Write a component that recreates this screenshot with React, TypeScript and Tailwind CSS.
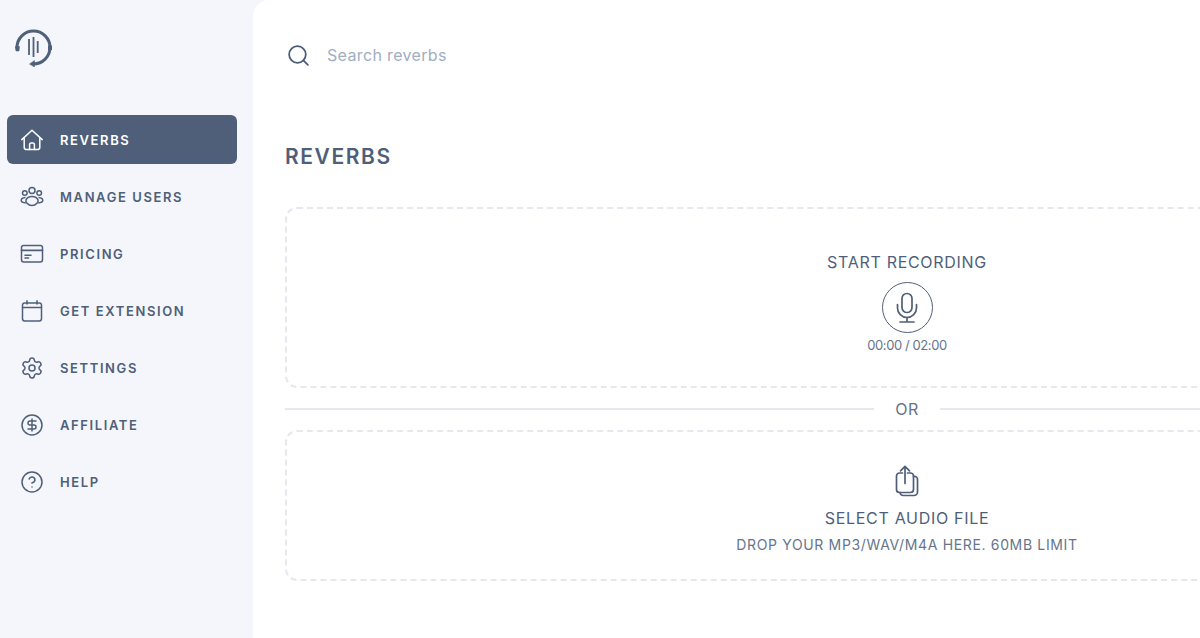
import React from "react";
import { Settings, CircleDollarSign, CircleHelp, Search } from "lucide-react";

const HomeIcon = () => (
  <svg width="24" height="24" viewBox="0 0 24 24" fill="none" stroke="currentColor" strokeWidth="1.5" strokeLinejoin="round" strokeLinecap="round">
    <path d="M1.800 11.600 12 2.200l10.200 9.400" />
    <path d="M4.200 10v9.200a2.400 2.400 0 0 0 2.400 2.400h10.800a2.400 2.400 0 0 0 2.400-2.400V10" />
    <path d="M9.600 21.600v-5.200a1.400 1.400 0 0 1 1.400-1.400h2a1.400 1.400 0 0 1 1.400 1.400v5.200" />
  </svg>
);
const UsersIcon = () => (
  <svg width="24" height="24" viewBox="0 0 24 24" fill="none" stroke="currentColor" strokeWidth="1.5">
    <circle cx="12" cy="5.500" r="3" />
    <circle cx="4.800" cy="8" r="2.300" />
    <circle cx="19.200" cy="8" r="2.300" />
    <path d="M12 11.500c2.800 0 5.200 1.500 6 3.500.5 1.300-.2 2.300-1 3.200-1.200 1.300-3 2.300-5 2.300s-3.800-1-5-2.300c-.8-.9-1.500-1.900-1-3.200.8-2 3.200-3.500 6-3.500Z" />
    <path d="M5.500 12.500c-2.300.2-4.300 1.300-4.300 2.800s1.800 2.500 4.600 2.600M18.500 12.500c2.300.2 4.300 1.300 4.300 2.800s-1.800 2.500-4.600 2.600" />
  </svg>
);
const CardIcon = () => (
  <svg width="24" height="24" viewBox="0 0 24 24" fill="none" stroke="currentColor" strokeWidth="1.5" strokeLinecap="round">
    <rect x="1.500" y="3.500" width="21" height="16.500" rx="2.200" />
    <path d="M1.500 8.300h21" strokeWidth="1.700" />
    <path d="M5 13.300h6M5 16.100h3.500" />
  </svg>
);
const CalIcon = () => (
  <svg width="24" height="24" viewBox="0 0 24 24" fill="none" stroke="currentColor" strokeWidth="1.5" strokeLinecap="round">
    <rect x="2.500" y="4" width="19" height="18" rx="2.200" />
    <path d="M2.500 8.500h19M7 1.800V5M17 1.800V5" />
  </svg>
);
const LogoIcon = () => (
  <svg width="38" height="39" viewBox="0 0 38 39" fill="none" stroke="#4f6079">
    <path d="M2 19.500A16.500 16.500 0 1 1 18.500 36" strokeWidth="3" />
    <path d="M0 18.500h4.500l-.5 4.500H1Z" fill="#4f6079" strokeWidth="0.500" />
    <path d="M19.500 32.500v6.500l-5-3Z" fill="#4f6079" strokeWidth="0.500" />
    <path d="M14 11v16M18.500 9v20M22.700 13v12" strokeWidth="1.800" />
    <path d="M35 17.500v4.500" strokeWidth="4" />
  </svg>
);
const MicIcon = () => (
  <svg width="24" height="32" viewBox="0 0 24 32" fill="none" stroke="#4f5f7a" strokeWidth="1.700" strokeLinecap="round">
    <rect x="7" y="1.500" width="10" height="19" rx="5" />
    <path d="M2.500 12.500v3.500a9.500 9.500 0 0 0 19 0v-3.500" />
    <path d="M12 25.500V29.500M5 30h14" />
  </svg>
);
const ShareIcon = () => (
  <svg width="26" height="32" viewBox="0 0 26 32" fill="none" stroke="#4f5f7a" strokeWidth="1.700" strokeLinecap="round" strokeLinejoin="round">
    <path d="M8.500 8H5.500a3 3 0 0 0-3 3v13.500a3 3 0 0 0 3 3h11a3 3 0 0 0 3-3V11a3 3 0 0 0-3-3h-3" />
    <path d="M11 18.500V1.500M6.500 5.800 11 1.300l4.500 4.500" />
    <path d="M19.500 11.500a3 3 0 0 1 4 3v12.500a3.500 3.500 0 0 1-3.500 3.500H9.500a3.500 3.500 0 0 1-3.500-3" />
  </svg>
);

const items: { label: string; icon: React.ReactNode; active?: boolean }[] = [
  { label: "REVERBS", icon: <HomeIcon />, active: true },
  { label: "MANAGE USERS", icon: <UsersIcon /> },
  { label: "PRICING", icon: <CardIcon /> },
  { label: "GET EXTENSION", icon: <CalIcon /> },
  { label: "SETTINGS", icon: <Settings size={24} strokeWidth={1.500} /> },
  { label: "AFFILIATE", icon: <CircleDollarSign size={24} strokeWidth={1.500} /> },
  { label: "HELP", icon: <CircleHelp size={24} strokeWidth={1.500} /> },
];

export default function App() {
  return (
    <div className="flex h-[638px] w-[1200px] overflow-hidden bg-[#f4f6fb] font-['Inter','Liberation_Sans',sans-serif] text-[#4f5f7a]">
      <aside className="flex w-[253px] shrink-0 flex-col">
        <div className="h-[115px] pl-[15px] pt-[28px]">
          <LogoIcon />
        </div>
        <nav className="flex flex-col gap-[8px] pl-[7px] pr-[16px]">
          {items.map((it) => (
            <div
              key={it.label}
              className={
                it.active
                  ? "flex h-[49px] items-center gap-[16px] rounded-md bg-[#4f5f7a] pl-[13px] text-white"
                  : "flex h-[49px] items-center gap-[16px] rounded-md pl-[13px] text-[#4f5f7a]"
              }
            >
              <span className="flex h-6 w-6 shrink-0 items-center justify-center">{it.icon}</span>
              <span className="pt-[2px] text-[13px] leading-none font-semibold tracking-[1.600px]">{it.label}</span>
            </div>
          ))}
        </nav>
      </aside>
      <main className="min-w-0 flex-1 rounded-tl-[16px] bg-white pl-[32px]">
        <div className="flex h-[110px] items-center pl-[1px]">
          <Search size={25} strokeWidth={1.700} className="text-[#4a5c78]" />
          <span className="ml-[16px] text-[16px] leading-none tracking-[0.350px] text-[#a0aec0]">Search reverbs</span>
        </div>
        <h1 className="mt-[36px] h-[22px] text-[21px] leading-[22px] font-semibold tracking-[1.600px] text-[#4f5f7a]">REVERBS</h1>
        <div className="w-[1244px]">
          <div className="mt-[39px] flex h-[181px] flex-col items-center rounded-[12px] border-2 border-dashed border-[#e6e8ee] pt-[43px]">
            <div className="text-[16px] leading-[20px] tracking-[0.700px] text-[#4f5f7a]">START RECORDING</div>
            <div className="mt-[10px] flex h-[51px] w-[51px] items-center justify-center rounded-full border border-[#4f5f7a]">
              <MicIcon />
            </div>
            <div className="mt-[2px] text-[13px] leading-[20px] tracking-[-0.400px] text-[#66758d]">00:00 / 02:00</div>
          </div>
          <div className="my-[11px] flex h-[20px] items-center">
            <div className="h-[2px] flex-1 bg-[#e6e8ee]" />
            <div className="w-[66px] text-center text-[16px] tracking-[0.500px] leading-[20px] text-[#66758d]">OR</div>
            <div className="h-[2px] flex-1 bg-[#e6e8ee]" />
          </div>
          <div className="flex h-[151px] flex-col items-center rounded-[12px] border-2 border-dashed border-[#e6e8ee] pt-[33px]">
            <ShareIcon />
            <div className="mt-[10px] text-[16px] leading-[22px] tracking-[0.700px] text-[#4f5f7a]">SELECT AUDIO FILE</div>
            <div className="mt-[6px] text-[14px] leading-[20px] tracking-[0.650px] text-[#66758d]">DROP YOUR MP3/WAV/M4A HERE. 60MB LIMIT</div>
          </div>
        </div>
      </main>
    </div>
  );
}
